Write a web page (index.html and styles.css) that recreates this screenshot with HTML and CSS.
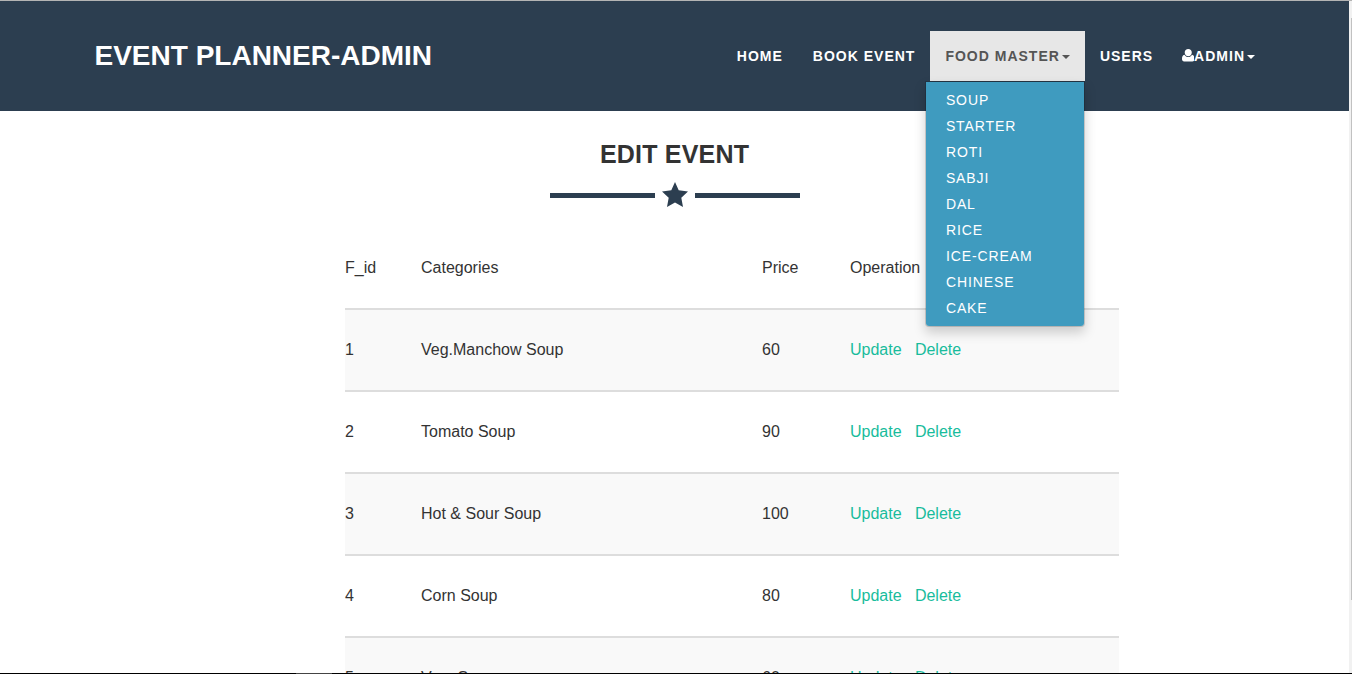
FILE: index.html
```html
<!DOCTYPE html>
<html lang="en">
<head>
<meta charset="utf-8">
<title>Event Planner - Admin</title>
<link rel="stylesheet" href="styles.css">
</head>
<body>
<div class="window">
  <div class="view">
    <div class="page">
      <header class="navbar">
        <a class="brand">EVENT PLANNER-ADMIN</a>
        <nav class="nav">
          <a class="nav-link">HOME</a>
          <a class="nav-link">BOOK EVENT</a>
          <div class="dropdown">
            <a class="nav-link open">FOOD MASTER<span class="caret"></span></a>
            <div class="menu">
              <a>SOUP</a>
              <a>STARTER</a>
              <a>ROTI</a>
              <a>SABJI</a>
              <a>DAL</a>
              <a>RICE</a>
              <a>ICE-CREAM</a>
              <a>CHINESE</a>
              <a>CAKE</a>
            </div>
          </div>
          <a class="nav-link">USERS</a>
          <a class="nav-link admin"><svg class="user" viewBox="0 0 12 12"><path d="M6 0C4 0 2.600 1.400 2.600 3.400S4.100 7 6 7 9.400 5.400 9.400 3.400 8 0 6 0ZM2.400 5.400C.5 5.700 0 7.500 0 9.700 0 11.200.8 12 2 12H10C11.200 12 12 11.200 12 9.700 12 7.500 11.500 5.700 9.600 5.400 8.700 6.900 7.500 7.600 6 7.600S3.300 6.900 2.400 5.400Z"/></svg>ADMIN<span class="caret"></span></a>
        </nav>
      </header>
      <main>
        <h1 class="title">EDIT EVENT</h1>
        <div class="divider">
          <span class="bar"></span>
          <svg class="star" viewBox="0 0 26 25"><path d="M13 0 16.700 8.200 26 9.500 19.300 15.800 21 25 13 20.600 5 25 6.700 15.800 0 9.500 9.300 8.200Z"/></svg>
          <span class="bar"></span>
        </div>
        <table class="foods">
          <colgroup><col class="c-id"><col class="c-name"><col class="c-price"><col></colgroup>
          <tbody>
            <tr><td>F_id</td><td>Categories</td><td>Price</td><td>Operation</td></tr>
            <tr><td>1</td><td>Veg.Manchow Soup</td><td>60</td><td><a>Update</a><a>Delete</a></td></tr>
            <tr><td>2</td><td>Tomato Soup</td><td>90</td><td><a>Update</a><a>Delete</a></td></tr>
            <tr><td>3</td><td>Hot &amp; Sour Soup</td><td>100</td><td><a>Update</a><a>Delete</a></td></tr>
            <tr><td>4</td><td>Corn Soup</td><td>80</td><td><a>Update</a><a>Delete</a></td></tr>
            <tr><td>5</td><td>Veg. Soup</td><td>60</td><td><a>Update</a><a>Delete</a></td></tr>
          </tbody>
        </table>
      </main>
    </div>
    <div class="scrollbar"><div class="thumb"></div></div>
  </div>
  <div class="taskbar"><div class="task"></div></div>
</div>
</body>
</html>
```
FILE: styles.css
```css
* { box-sizing: border-box; }

body {
  margin: 0;
  overflow: hidden;
  background: #fff;
  color: #333;
  font: 16px/23px "Liberation Sans", Arial, sans-serif;
}

.window {
  display: flex;
  flex-direction: column;
  height: 674px;
  border-top: 1px solid #b4b4b4;
}

.view { display: flex; flex: 1; min-height: 0; }
.page { flex: 1; height: 672px; overflow: hidden; }

.scrollbar { width: 3px; padding: 17px 0 0 2px; background: #f1f1f1; }
.thumb { height: 582px; background: #c1c1c1; }

.taskbar { height: 1px; padding-left: 296px; background: #000; }
.task { width: 36px; height: 1px; background: #444; }

.navbar {
  display: flex;
  justify-content: space-between;
  height: 110px;
  padding: 30px 79px 30px 94.5px;
  background: #2c3e50;
  color: #fff;
}

.brand { font-size: 28px; font-weight: 700; line-height: 49px; white-space: nowrap; }

.nav { display: flex; height: 50px; }

.nav-link {
  display: flex;
  align-items: center;
  height: 50px;
  padding: 0 15px;
  font-size: 14px;
  font-weight: 700;
  letter-spacing: 1px;
  white-space: nowrap;
}

.open { background: #e7e7e7; color: #555; }
.admin { padding-left: 13.500px; }

.caret {
  margin: 2px 0 0 2px;
  border: 4px solid transparent;
  border-top-color: currentColor;
  border-bottom: 0;
}

.user { width: 12.500px; height: 12.500px; margin: 0 0 1px; fill: currentColor; }

.dropdown { position: relative; }

.menu {
  position: absolute;
  z-index: 2;
  top: 50px;
  right: 0;
  width: 160px;
  padding: 5px 0;
  border: 1px solid rgba(0, 0, 0, .15);
  border-radius: 0 0 4px 4px;
  background: #3f9bbf;
  background-clip: padding-box;
  box-shadow: 0 6px 12px rgba(0, 0, 0, .175);
}

.menu a {
  display: block;
  padding: 3px 20px;
  font-size: 14px;
  line-height: 20px;
  letter-spacing: .9px;
}

.title {
  margin: 29px 0 0;
  font-size: 25px;
  line-height: 28px;
  letter-spacing: .2px;
  text-align: center;
}

.divider {
  display: flex;
  align-items: center;
  justify-content: space-between;
  width: 250px;
  height: 26px;
  margin: 14px auto 20px;
}

.bar { width: 105px; height: 5px; background: #2c3e50; }
.star { width: 26px; height: 25px; margin-bottom: 1px; fill: #2c3e50; }

.foods {
  width: 774px;
  margin-left: 345px;
  border-collapse: separate;
  border-spacing: 0;
  table-layout: fixed;
}

.c-id { width: 76px; }
.c-name { width: 341px; }
.c-price { width: 88px; }

.foods td {
  height: 82px;
  padding: 0 0 2px;
  border-top: 2px solid #ddd;
  vertical-align: middle;
}

.foods tr:first-child td { height: 80px; border-top: 0; }
.foods tr:nth-child(even) { background: #f9f9f9; }
.foods a { margin-right: 13.300px; color: #18bc9c; }
```
